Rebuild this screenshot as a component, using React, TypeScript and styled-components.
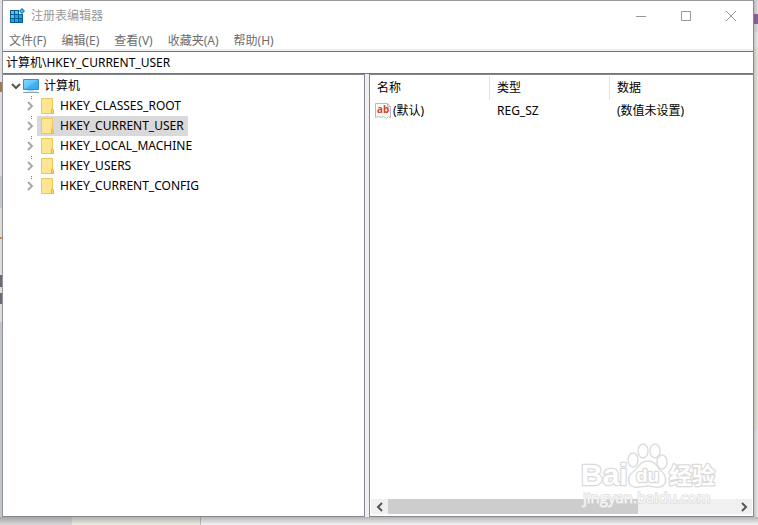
import React, { useState } from "react";
import styled, { createGlobalStyle } from "styled-components";

const GlobalStyle = createGlobalStyle`
  * { box-sizing: border-box; }
  body { margin: 0; }
  body, button, input {
    font-family: "Noto Sans", "Noto Sans CJK SC", sans-serif;
    font-size: 12px;
  }
  button {
    margin: 0;
    padding: 0;
    border: 0;
    background: none;
    color: inherit;
    cursor: default;
  }
  svg { display: block; flex: none; }
`;

const Desktop = styled.div`
  position: relative;
  display: flex;
  height: 100vh;
  padding: 0 4px 8px 2px;
  overflow: hidden;
  background: linear-gradient(#d6d6d9 0 32px, #e4e4e0 32px 100%);
`;

const LeftStrip = styled.div`
  position: absolute;
  left: 0;
  top: 0;
  bottom: 0;
  width: 2px;
  background: linear-gradient(
    #dfdfe1 0 82px, #a9774a 82px 92px, #dcdcdc 92px 176px, #c6c7ca 176px 208px,
    #dfddd1 208px 237px, #e58042 237px 239px, #dfddd1 239px 275px,
    #756575 275px 287px, #dfddd1 287px 293px, #756575 293px 304px,
    #dfddd1 304px 322px, #c3c5c8 322px 100%
  );
`;

const RightStrip = styled.div`
  position: absolute;
  right: 0;
  top: 0;
  bottom: 0;
  width: 4px;
  background: linear-gradient(
    90deg, rgba(90, 90, 90, 0.3), rgba(90, 90, 90, 0.06)
  ), linear-gradient(
    #e4e4ea 0 14px, #8f5fa0 14px 24px, #e4e4ea 24px 32px, #f4f4f4 32px 47px,
    #eeefe1 47px 430px, #f2f2f2 430px 100%
  );
`;

const BottomStrip = styled.div`
  position: absolute;
  left: 0;
  right: 0;
  bottom: 0;
  height: 8px;
  background: linear-gradient(rgba(80, 80, 80, 0.4), rgba(90, 90, 90, 0.02)),
    linear-gradient(90deg, #dcdcdc 0 72px, #f1f2e5 72px 200px, #c2c2c2 200px 201px, #f8f8f8 201px 100%);
`;

const Window = styled.main`
  position: relative;
  flex: 1;
  min-width: 0;
  display: flex;
  flex-direction: column;
  border-top: 1px solid #999;
  border-left: 1px solid #8d929b;
  border-right: 1px solid #858a94;
  background: #fff;
  color: #000;
`;

const TitleBar = styled.header`
  display: flex;
  align-items: center;
  height: 30px;
  padding-left: 6px;
  gap: 6px;
`;

const Title = styled.h1`
  flex: 1;
  margin: 0;
  font-size: 12px;
  font-weight: 400;
  line-height: 20px;
  color: #999;
`;

const WindowButtons = styled.div`
  display: flex;
  height: 100%;
`;

const WindowButton = styled.button`
  display: grid;
  place-items: center;
  width: 45px;
  color: #999;
`;

const MenuBar = styled.nav`
  display: flex;
  align-items: flex-start;
  height: 20px;
  padding-left: 6px;
  gap: 15px;
  border-bottom: 2px solid #f0f0f0;
`;

const MenuButton = styled.button`
  line-height: 20px;
  color: #6d6d6d;
  white-space: nowrap;
`;

const AddressInput = styled.input`
  width: 100%;
  height: 23px;
  padding: 0 3px 1px;
  border: 1px solid #72757c;
  border-width: 1px 0;
  line-height: 20px;
  background: #fff;
  color: #000;
  outline: 0;
`;

const Panes = styled.div`
  flex: 1;
  min-height: 0;
  display: grid;
  grid-template-columns: 362px 4px minmax(0, 1fr);
  background: #f0f0f0;
`;

const TreePane = styled.section`
  border: 1px solid #828790;
  border-left: 0;
  background: #fff;
  overflow: hidden;
`;

const ListPane = styled.section`
  grid-column: 3;
  display: flex;
  flex-direction: column;
  border: 1px solid #828790;
  border-right: 0;
  background: #fff;
  min-width: 0;
`;

const Tree = styled.ul`
  margin: 0;
  padding: 1px 0 0 5px;
  list-style: none;
`;

const Branch = styled.ul`
  margin: 0;
  padding: 0 0 0 15px;
  list-style: none;
`;

const TreeRow = styled.div`
  display: flex;
  align-items: center;
  height: 20px;
`;

const Expander = styled.button<{ $linked?: boolean }>`
  display: grid;
  place-items: center;
  width: ${(p) => (p.$linked ? 14 : 15)}px;
  height: 20px;
  background: ${(p) =>
    p.$linked
      ? "linear-gradient(#777 0 1px, transparent 1px 2px, #777 2px 3px, transparent 3px) 8px 0 / 1px 20px no-repeat"
      : "none"};
`;

const KeyButton = styled.button<{ $selected?: boolean; $root?: boolean }>`
  display: flex;
  align-items: center;
  gap: 5px;
  height: 20px;
  padding: 0 4px 0 ${(p) => (p.$root ? 0 : 3)}px;
  line-height: 20px;
  white-space: nowrap;
  background: ${(p) => (p.$selected ? "#d9d9d9" : "transparent")};
`;

const TableArea = styled.div`
  flex: 1;
  overflow: hidden;
  padding-top: 1px;
`;

const ValueTable = styled.table`
  width: 100%;
  table-layout: fixed;
  border-collapse: separate;
  border-spacing: 0;
  text-align: left;
  white-space: nowrap;
`;

const HeadCell = styled.th<{ $fill?: boolean }>`
  width: ${(p) => (p.$fill ? "auto" : "120px")};
  height: 24px;
  padding: 0 0 0 7px;
  border-right: ${(p) => (p.$fill ? "0" : "1px solid #e5e5e5")};
  font-weight: 400;
  line-height: 20px;
`;

const Cell = styled.td`
  height: 21px;
  padding: 0 0 0 7px;
  line-height: 20px;
`;

const ValueName = styled.span`
  display: flex;
  align-items: center;
  gap: 2px;
  margin-left: -2px;
`;

const ScrollBar = styled.div`
  display: flex;
  height: 15px;
  margin: 0 1px 2px;
  background: #f0f0f0;
`;

const ScrollArrow = styled.button`
  display: grid;
  place-items: center;
  width: 17px;
`;

const ScrollTrack = styled.div`
  flex: 1;
`;

const ScrollThumb = styled.div`
  width: 76%;
  max-width: 250px;
  height: 100%;
  background: #cdcdcd;
`;

const Watermark = styled.div`
  position: absolute;
  right: 34px;
  bottom: 6px;
  pointer-events: none;
`;

const AppIcon = () => (
  <svg width="16" height="16" viewBox="0 0 16 16" aria-hidden="true">
    <path d="M1 2h9v4h4v9H1z" fill="#075b91" />
    <path d="M2 3h3v3H2zM6 3h3v3H6zM2 7h3v3H2z" fill="#4cc8f5" />
    <path d="M6 7h3v3H6zM10 7h3v3h-3zM2 11h3v3H2zM6 11h3v3H6z" fill="#22a9e0" />
    <path d="M10 11h3v3h-3z" fill="#1290cc" />
    <path d="m13 0 3 3-3 3-3-3z" fill="#087bb5" />
    <path d="m13 1.500 1.500 1.500L13 4.500 11.500 3z" fill="#65d2f5" />
  </svg>
);

const ComputerIcon = () => (
  <svg width="16" height="16" viewBox="0 0 16 16" aria-hidden="true">
    <defs>
      <linearGradient id="screen" x1="0" y1="0" x2="1" y2="1">
        <stop offset="0" stopColor="#8ad8ff" />
        <stop offset=".5" stopColor="#62c4fa" />
        <stop offset=".52" stopColor="#42b3f5" />
        <stop offset="1" stopColor="#2ba8f1" />
      </linearGradient>
    </defs>
    <path d="M.5 1.500h15v10H.5z" fill="url(#screen)" stroke="#3f8fb8" />
    <path d="M5 12h6v1H5z" fill="#c2d0d8" />
    <path d="M2 13h12v1H2z" fill="#e0e7eb" />
    <path d="M0 14h16v1H0z" fill="#8aa3b1" />
  </svg>
);

const FolderIcon = () => (
  <svg width="15" height="16" viewBox="0 0 15 16" aria-hidden="true">
    <path d="M1.500.5h11v11l1 1v3h-12z" fill="#ffe591" stroke="#edc957" />
    <path d="M11.500 11v4.500h2v-3l-1-1.500z" fill="#f9d66d" stroke="#dfb83f" />
  </svg>
);

const StringIcon = () => (
  <svg width="16" height="16" viewBox="0 0 16 16" aria-hidden="true">
    <path d="M.5.5h12l3 3v11l-2-1-2 2-3-2-3 1-2-1-3 1z" fill="#fafafa" stroke="#b9b9b9" />
    <path d="M12.500.5v3h3" fill="none" stroke="#b9b9b9" />
    <text x="2" y="10" fill="#d54727" fontFamily="Open Sans, sans-serif" fontSize="10" fontWeight="700">ab</text>
  </svg>
);

const Chevron = ({ direction, color = "#555" }: { direction: "left" | "right" | "down"; color?: string }) => {
  const paths = { left: "m7 1-4 4 4 4", right: "m3 1 4 4-4 4", down: "m1 3 4 4 4-4" };
  return (
    <svg width="10" height="10" viewBox="0 0 10 10" aria-hidden="true">
      <path d={paths[direction]} fill="none" stroke={color} strokeWidth="2" />
    </svg>
  );
};

const BaiduMark = () => (
  <svg width="140" height="68" viewBox="0 0 140 68" aria-hidden="true">
    <g fill="#fff" stroke="#dedede" strokeWidth="1.500">
      <ellipse cx="54" cy="17" rx="5" ry="7" />
      <ellipse cx="64" cy="8" rx="5" ry="7" />
      <ellipse cx="76" cy="8" rx="5" ry="7" />
      <ellipse cx="83" cy="19" rx="5" ry="7" />
      <path d="M69 18c8 0 9 7 14 11 5 4 5 14-2 15-5 1-8-1-12-1s-10 2-14 1c-7-2-7-11-1-15 5-4 7-11 15-11z" />
    </g>
    <g fill="#fff" stroke="#dadada" strokeWidth="2.500" paintOrder="stroke" strokeLinejoin="round" fontFamily="Liberation Sans, Noto Sans CJK SC, sans-serif" fontWeight="700">
      <text x="2" y="42" fontSize="30">Bai</text>
      <text x="57" y="39" fontSize="19">du</text>
      <text x="90" y="41" fontSize="23">经验</text>
    </g>
    <text x="4" y="60" fill="#fff" fillOpacity=".8" stroke="#dedede" strokeWidth="1.500" paintOrder="stroke" fontFamily="Open Sans, sans-serif" fontSize="15">jingyan.baidu.com</text>
  </svg>
);

const menus = ["文件(F)", "编辑(E)", "查看(V)", "收藏夹(A)", "帮助(H)"];
const keys = ["HKEY_CLASSES_ROOT", "HKEY_CURRENT_USER", "HKEY_LOCAL_MACHINE", "HKEY_USERS", "HKEY_CURRENT_CONFIG"];

export default function App() {
  const [selected, setSelected] = useState("HKEY_CURRENT_USER");
  const [open, setOpen] = useState(true);

  return (
    <Desktop>
      <GlobalStyle />
      <LeftStrip />
      <RightStrip />
      <BottomStrip />
      <Window>
        <TitleBar>
          <AppIcon />
          <Title>注册表编辑器</Title>
          <WindowButtons>
            <WindowButton aria-label="最小化">
              <svg width="12" height="12"><path d="M1 6.500h10" stroke="currentColor" /></svg>
            </WindowButton>
            <WindowButton aria-label="最大化">
              <svg width="12" height="12"><path d="M1.500 1.500h9v9h-9z" fill="none" stroke="currentColor" /></svg>
            </WindowButton>
            <WindowButton aria-label="关闭">
              <svg width="12" height="12"><path d="m1 1 10 10M11 1 1 11" stroke="currentColor" /></svg>
            </WindowButton>
          </WindowButtons>
        </TitleBar>
        <MenuBar>
          {menus.map((menu) => <MenuButton key={menu}>{menu}</MenuButton>)}
        </MenuBar>
        <AddressInput aria-label="地址" value={`计算机\\${selected}`} readOnly />
        <Panes>
          <TreePane>
            <Tree>
              <li>
                <TreeRow>
                  <Expander aria-label="计算机" aria-expanded={open} onClick={() => setOpen(!open)}>
                    <Chevron direction={open ? "down" : "right"} />
                  </Expander>
                  <KeyButton $root><ComputerIcon />计算机</KeyButton>
                </TreeRow>
                {open && (
                  <Branch>
                    {keys.map((key) => (
                      <li key={key}>
                        <TreeRow>
                          <Expander $linked aria-label={key} aria-expanded={false}>
                            <Chevron direction="right" color="#aaa" />
                          </Expander>
                          <KeyButton $selected={key === selected} onClick={() => setSelected(key)}>
                            <FolderIcon />{key}
                          </KeyButton>
                        </TreeRow>
                      </li>
                    ))}
                  </Branch>
                )}
              </li>
            </Tree>
          </TreePane>
          <ListPane>
            <TableArea>
              <ValueTable>
                <thead>
                  <tr>
                    <HeadCell>名称</HeadCell>
                    <HeadCell>类型</HeadCell>
                    <HeadCell $fill>数据</HeadCell>
                  </tr>
                </thead>
                <tbody>
                  <tr>
                    <Cell><ValueName><StringIcon />(默认)</ValueName></Cell>
                    <Cell>REG_SZ</Cell>
                    <Cell>(数值未设置)</Cell>
                  </tr>
                </tbody>
              </ValueTable>
            </TableArea>
            <ScrollBar>
              <ScrollArrow aria-label="向左滚动"><Chevron direction="left" /></ScrollArrow>
              <ScrollTrack><ScrollThumb /></ScrollTrack>
              <ScrollArrow aria-label="向右滚动"><Chevron direction="right" /></ScrollArrow>
            </ScrollBar>
          </ListPane>
        </Panes>
        <Watermark><BaiduMark /></Watermark>
      </Window>
    </Desktop>
  );
}
